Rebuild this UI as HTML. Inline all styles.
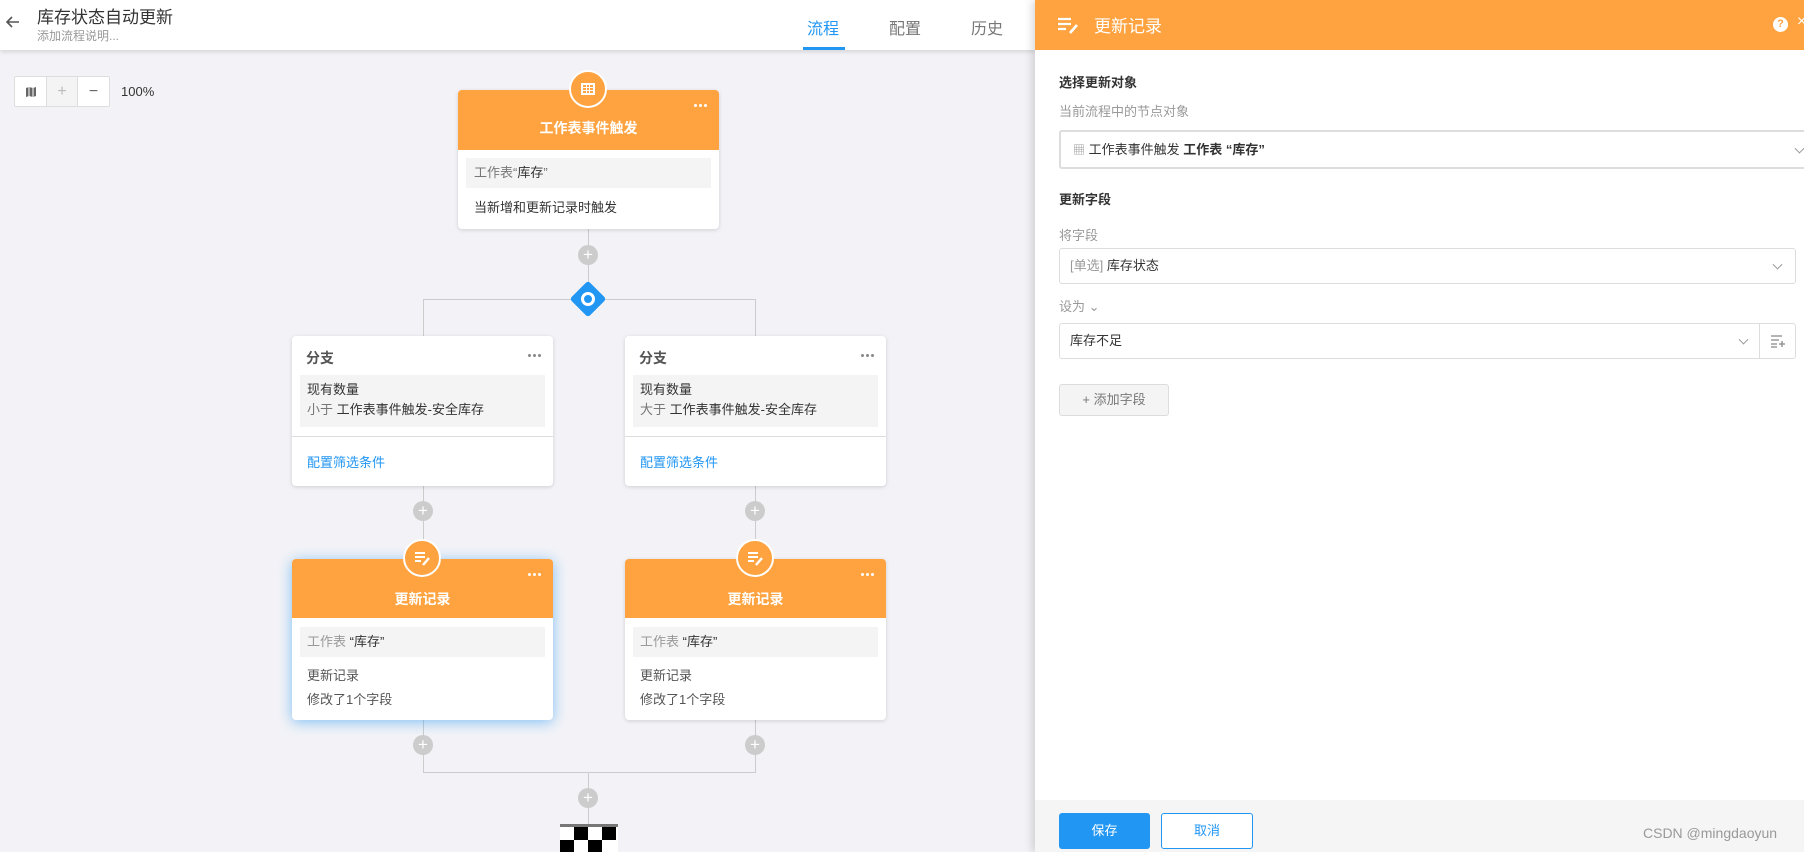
<!DOCTYPE html>
<html><head><meta charset="utf-8"><style>
*{box-sizing:border-box;margin:0;padding:0}
body{width:1804px;height:852px;overflow:hidden;background:#f3f3f7;font-family:"Liberation Sans","Noto Sans CJK SC",sans-serif;position:relative;font-size:13px;color:#333}
.abs{position:absolute}
.hdr{left:0;top:0;width:1035px;height:50px;background:#fff;box-shadow:0 2px 4px rgba(0,0,0,.12);z-index:2}
.card{position:absolute;background:#fff;border-radius:4px;box-shadow:0 1px 4px rgba(0,0,0,.15)}
.oh{background:#ffa340;border-radius:4px 4px 0 0;color:#fff;font-weight:bold;font-size:14px;text-align:center}
.gbox{background:#f4f4f4;position:absolute}
.plus{position:absolute;width:20px;height:20px;border-radius:50%;background:#ccc;color:#fff;text-align:center;line-height:19px;font-size:17px}
.line{position:absolute;background:#ccc}
.dots{position:absolute;right:12px;display:flex;gap:2px}
.dots i{width:3px;height:3px;border-radius:50%;background:#fff;display:block}
.dots.g i{background:#888}
.ic{position:absolute;width:38px;height:38px;border-radius:50%;background:#ffa340;border:2px solid #fff}
.sel{position:absolute;border:1px solid #ddd;border-radius:3px;background:#fff;font-size:13px}
.chev{position:absolute;right:10px;top:50%;width:7px;height:7px;border-right:1px solid #999;border-bottom:1px solid #999;transform:translateY(-70%) rotate(45deg)}
</style></head><body>
<div class="abs hdr">
 <svg class="abs" style="left:5px;top:14px" width="16" height="16" viewBox="0 0 16 16"><path d="M14 8H2M7 3L2 8l5 5" stroke="#555" stroke-width="1.6" fill="none"/></svg>
 <div class="abs" style="left:37px;top:3px;font-size:17px;color:#333">库存状态自动更新</div>
 <div class="abs" style="left:37px;top:27px;font-size:12px;color:#999">添加流程说明...</div>
 <div class="abs" style="left:807px;top:15px;font-size:16px;color:#2196f3">流程</div>
 <div class="abs" style="left:803px;top:47px;width:42px;height:3px;background:#2196f3"></div>
 <div class="abs" style="left:889px;top:15px;font-size:16px;color:#777">配置</div>
 <div class="abs" style="left:971px;top:15px;font-size:16px;color:#777">历史</div>
</div>
<div class="abs" style="left:14px;top:76px;width:96px;height:31px;border:1px solid #ddd;background:#fff;border-radius:2px;display:flex">
 <div style="width:32px;border-right:1px solid #ddd;position:relative"><svg style="position:absolute;left:10px;top:9px" width="12" height="12" viewBox="0 0 12 12"><path d="M1 2l3-1 4 1 3-1v9l-3 1-4-1-3 1z" fill="#666"/><path d="M4 1v10M8 2v10" stroke="#fff" stroke-width="1"/></svg></div>
 <div style="width:31px;border-right:1px solid #ddd;background:#f4f4f4;text-align:center;line-height:29px;color:#bbb;font-size:16px">+</div>
 <div style="width:31px;text-align:center;line-height:29px;color:#666;font-size:16px">−</div>
</div>
<div class="abs" style="left:121px;top:84px;font-size:13px;color:#333">100%</div>
<div class="line" style="left:588px;top:229px;width:1px;height:70px"></div>
<div class="line" style="left:423px;top:299px;width:333px;height:1px"></div>
<div class="line" style="left:423px;top:299px;width:1px;height:37px"></div>
<div class="line" style="left:755px;top:299px;width:1px;height:37px"></div>
<div class="line" style="left:423px;top:486px;width:1px;height:73px"></div>
<div class="line" style="left:755px;top:486px;width:1px;height:73px"></div>
<div class="line" style="left:423px;top:720px;width:1px;height:52px"></div>
<div class="line" style="left:755px;top:720px;width:1px;height:52px"></div>
<div class="line" style="left:423px;top:772px;width:333px;height:1px"></div>
<div class="line" style="left:588px;top:772px;width:1px;height:53px"></div>
<div class="plus" style="left:578px;top:245px">+</div>
<div class="plus" style="left:413px;top:501px">+</div>
<div class="plus" style="left:745px;top:501px">+</div>
<div class="plus" style="left:413px;top:735px">+</div>
<div class="plus" style="left:745px;top:735px">+</div>
<div class="plus" style="left:578px;top:788px">+</div>
<div class="abs" style="left:575px;top:286px;width:26px;height:26px;background:#2196f3;transform:rotate(45deg);border-radius:3px"></div>
<div class="abs" style="left:581px;top:292px;width:14px;height:14px;border:3px solid #fff;border-radius:50%"></div>
<svg class="abs" style="left:560px;top:824px" width="58" height="28" viewBox="0 0 58 28"><rect width="58" height="3" fill="#777"/><rect y="3" width="58" height="25" fill="#fff"/><rect x="14" y="3" width="14" height="13" fill="#000"/><rect x="42" y="3" width="14" height="13" fill="#000"/><rect x="0" y="16" width="14" height="12" fill="#000"/><rect x="28" y="16" width="14" height="12" fill="#000"/></svg>
<div class="card" style="left:458px;top:90px;width:261px;height:139px">
 <div class="oh" style="height:60px;line-height:76px">工作表事件触发</div>
 <div class="dots" style="top:14px"><i></i><i></i><i></i></div>
 <div class="gbox" style="left:8px;top:68px;width:245px;height:30px;line-height:30px;padding-left:8px;color:#777">工作表“<span style="color:#333">库存</span>”</div>
 <div class="abs" style="left:16px;top:107px;color:#333">当新增和更新记录时触发</div>
</div>
<div class="ic" style="left:569px;top:70px"><svg style="position:absolute;left:8px;top:8px" width="18" height="18" viewBox="0 0 18 18" fill="#fff"><path d="M2 3h14v12H2z M4 5v2h3V5z M8 5v2h2V5z M11 5v2h3V5z M4 8v2h3V8z M8 8v2h2V8z M11 8v2h3V8z M4 11v2h3v-2z M8 11v2h2v-2z M11 11v2h3v-2z" fill-rule="evenodd"/></svg></div>
<div class="card" style="left:292px;top:336px;width:261px;height:150px">
 <div class="abs" style="left:14px;top:12px;font-size:14px;font-weight:bold;color:#555">分支</div>
 <div class="dots g" style="top:18px"><i></i><i></i><i></i></div>
 <div class="gbox" style="left:8px;top:39px;width:245px;height:52px;padding:5px 0 0 7px;line-height:20px;color:#333">现有数量<br><span style="color:#777">小于</span> 工作表事件触发-安全库存</div>
 <div class="abs" style="left:0;top:100px;width:261px;height:1px;background:#ddd"></div>
 <div class="abs" style="left:15px;top:116px;color:#2196f3">配置筛选条件</div>
</div>
<div class="card" style="left:625px;top:336px;width:261px;height:150px">
 <div class="abs" style="left:14px;top:12px;font-size:14px;font-weight:bold;color:#555">分支</div>
 <div class="dots g" style="top:18px"><i></i><i></i><i></i></div>
 <div class="gbox" style="left:8px;top:39px;width:245px;height:52px;padding:5px 0 0 7px;line-height:20px;color:#333">现有数量<br><span style="color:#777">大于</span> 工作表事件触发-安全库存</div>
 <div class="abs" style="left:0;top:100px;width:261px;height:1px;background:#ddd"></div>
 <div class="abs" style="left:15px;top:116px;color:#2196f3">配置筛选条件</div>
</div>
<div class="card" style="left:292px;top:559px;width:261px;height:161px;box-shadow:0 2px 14px rgba(33,150,243,.55)">
 <div class="oh" style="height:59px;line-height:80px">更新记录</div>
 <div class="dots" style="top:14px"><i></i><i></i><i></i></div>
 <div class="gbox" style="left:8px;top:68px;width:245px;height:30px;line-height:30px;padding-left:7px;color:#999">工作表 <span style="color:#333">“库存”</span></div>
 <div class="abs" style="left:15px;top:106px;color:#555">更新记录</div>
 <div class="abs" style="left:15px;top:130px;color:#555">修改了1个字段</div>
</div>
<div class="card" style="left:625px;top:559px;width:261px;height:161px">
 <div class="oh" style="height:59px;line-height:80px">更新记录</div>
 <div class="dots" style="top:14px"><i></i><i></i><i></i></div>
 <div class="gbox" style="left:8px;top:68px;width:245px;height:30px;line-height:30px;padding-left:7px;color:#999">工作表 <span style="color:#333">“库存”</span></div>
 <div class="abs" style="left:15px;top:106px;color:#555">更新记录</div>
 <div class="abs" style="left:15px;top:130px;color:#555">修改了1个字段</div>
</div>
<div class="ic" style="left:403px;top:539px"><svg style="position:absolute;left:8px;top:8px" width="18" height="18" viewBox="0 0 18 18"><path d="M2 4h10M2 8h10M2 12h6" stroke="#fff" stroke-width="2"/><path d="M10 16l6-7" stroke="#fff" stroke-width="2.4"/></svg></div>
<div class="ic" style="left:736px;top:539px"><svg style="position:absolute;left:8px;top:8px" width="18" height="18" viewBox="0 0 18 18"><path d="M2 4h10M2 8h10M2 12h6" stroke="#fff" stroke-width="2"/><path d="M10 16l6-7" stroke="#fff" stroke-width="2.4"/></svg></div>
<div class="abs" style="left:1035px;top:0;width:769px;height:852px;background:#fff;box-shadow:-3px 0 8px rgba(0,0,0,.15);z-index:3">
 <div class="abs" style="left:0;top:0;width:769px;height:50px;background:#ffa340">
  <svg class="abs" style="left:22px;top:16px" width="22" height="18" viewBox="0 0 22 18"><path d="M1 3h13M1 8h13M1 13h8" stroke="#fff" stroke-width="2.2"/><path d="M13 17l7-8" stroke="#fff" stroke-width="2.6"/></svg>
  <div class="abs" style="left:59px;top:12px;font-size:17px;color:#fff">更新记录</div>
  <div class="abs" style="left:738px;top:17px;width:15px;height:15px;border-radius:50%;background:#fff;color:#ffa340;font-size:11px;font-weight:bold;text-align:center;line-height:15px">?</div>
  <div class="abs" style="left:762px;top:13px;color:#fff;font-size:16px">×</div>
 </div>
 <div class="abs" style="left:24px;top:72px;font-weight:bold;font-size:13px;color:#333">选择更新对象</div>
 <div class="abs" style="left:24px;top:101px;font-size:13px;color:#999">当前流程中的节点对象</div>
 <div class="sel" style="left:24px;top:130px;width:760px;height:39px;border:2px solid #ddd;line-height:35px;padding-left:12px"><span style="color:#999;font-size:12px">▦</span> 工作表事件触发 <b>工作表 “库存”</b><div class="chev" style="right:14px"></div></div>
 <div class="abs" style="left:24px;top:189px;font-weight:bold;font-size:13px;color:#333">更新字段</div>
 <div class="abs" style="left:24px;top:225px;font-size:13px;color:#999">将字段</div>
 <div class="sel" style="left:24px;top:248px;width:737px;height:36px;line-height:34px;padding-left:10px"><span style="color:#999">[单选]</span> 库存状态<div class="chev" style="right:14px"></div></div>
 <div class="abs" style="left:24px;top:296px;font-size:13px;color:#999">设为 ⌄</div>
 <div class="sel" style="left:24px;top:323px;width:737px;height:36px;line-height:34px;padding-left:10px">库存不足<div class="chev" style="right:48px"></div>
  <div class="abs" style="right:0;top:0;width:36px;height:34px;border-left:1px solid #ddd"><svg style="position:absolute;left:10px;top:10px" width="16" height="14" viewBox="0 0 16 14"><path d="M1 2h11M1 6h8M1 10h6M1 13h6M12 7v6M9 10h6" stroke="#888" stroke-width="1.3"/></svg></div></div>
 <div class="abs" style="left:24px;top:384px;width:110px;height:32px;border:1px solid #ddd;background:#f4f4f4;border-radius:3px;text-align:center;line-height:30px;color:#777">+ 添加字段</div>
 <div class="abs" style="left:0;top:800px;width:769px;height:52px;background:#f5f5f5"></div>
 <div class="abs" style="left:24px;top:813px;width:91px;height:36px;background:#2196f3;border-radius:3px;color:#fff;text-align:center;line-height:36px">保存</div>
 <div class="abs" style="left:126px;top:813px;width:92px;height:36px;border:1px solid #2196f3;background:#fff;border-radius:3px;color:#2196f3;text-align:center;line-height:34px">取消</div>
 <div class="abs" style="left:608px;top:825px;color:#999;font-size:14px">CSDN @mingdaoyun</div>
</div>
</body></html>
